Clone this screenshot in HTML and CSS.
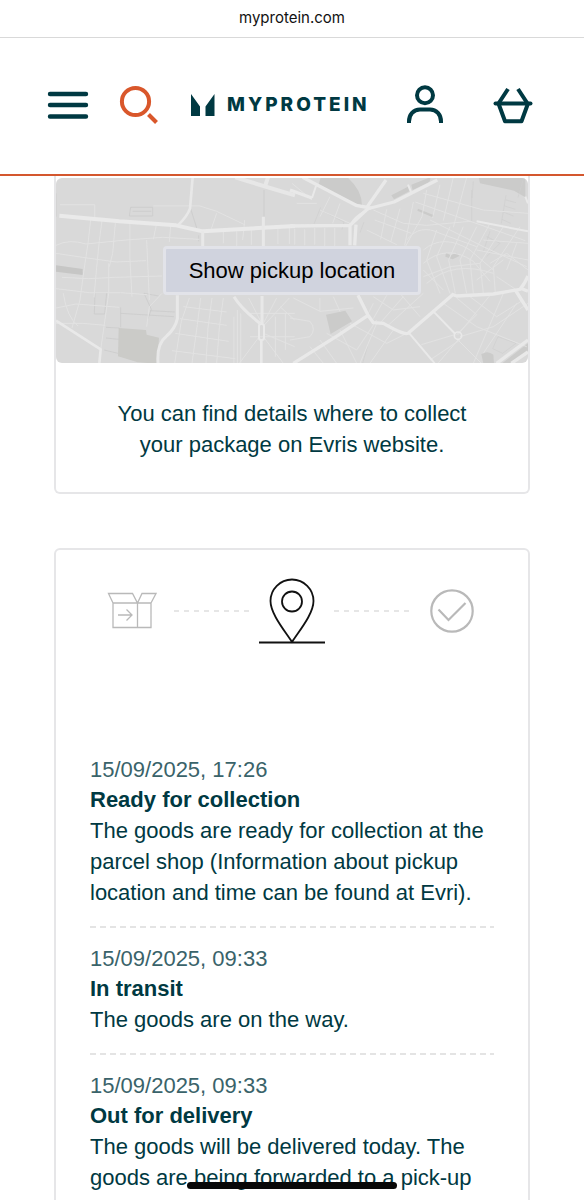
FILE: index.html
```html
<!DOCTYPE html>
<html lang="en">
<head>
<meta charset="utf-8">
<meta name="viewport" content="width=device-width, initial-scale=1">
<title>Track your order</title>
<link rel="stylesheet" href="styles.css">
</head>
<body>
<div class="screen">
  <div class="address-bar">myprotein.com</div>

  <header class="site-header">
    <div class="header-start">
      <button class="icon-button" type="button" aria-label="Menu">
        <svg width="42" height="42" viewBox="0 0 42 42" fill="none" stroke="currentColor" stroke-width="4.4" stroke-linecap="round"><path d="M3 10h36M3 21h36M3 32.500h36"/></svg>
      </button>
      <button class="icon-button search-button" type="button" aria-label="Search">
        <svg width="42" height="42" viewBox="0 0 42 42" fill="none" stroke="currentColor" stroke-width="4"><circle cx="16.500" cy="17.500" r="13.600"/><path d="M29.500 30.500l8 8"/></svg>
      </button>
      <a class="logo" href="#">
        <svg width="24" height="22" viewBox="0 0 24 22" fill="currentColor"><path d="M0 0l9 12.500V22H0zM23.500 0v22h-9v-9.500z"/></svg>
        <span>MYPROTEIN</span>
      </a>
    </div>
    <div class="header-end">
      <button class="icon-button" type="button" aria-label="Account">
        <svg width="42" height="42" viewBox="0 0 42 42" fill="none" stroke="currentColor" stroke-width="4"><circle cx="21" cy="11.200" r="8"/><path d="M5 39v-1.500C5 30.500 9.500 25.500 16 25.500h10c6.500 0 11 5 11 12V39"/></svg>
      </button>
      <a class="icon-button" href="#" aria-label="Basket">
        <svg width="42" height="42" viewBox="0 0 42 42" fill="none" stroke="currentColor" stroke-width="4" stroke-linejoin="round"><path d="M3.500 19.500h35" stroke-linecap="round"/><path d="M6.500 19.500L16 5M35.500 19.500L26 5M6.500 19.500L13 37.200h16.500l6.500-17.700"/></svg>
      </a>
    </div>
  </header>

  <main class="content">
    <section class="card pickup-card">
      <div class="map">
        <svg class="map-art" viewBox="0 0 472 185" preserveAspectRatio="xMidYMid slice" fill="none" stroke-linejoin="round" aria-hidden="true">
          <g transform="translate(-6 -8) scale(.33333)">
            <path fill="#c6c6c5" d="M18 286l80 11v18l-80-10z"/>
            <path fill="#cbcbc8" d="M206 474l82 6 2 14 37 9-4 78-60-4-59-18z"/>
            <g stroke="#c9c9c9" stroke-width="2">
              <path d="M242 112h66v26h-70zM248 124h56M135 368h35l-6 64h-31zM282 370l22 48-10 28M282 370l44 8M212 412v60M212 430l160 10M300 422l74 4M168 472l40 2M168 504l38 4M162 540l42 10M422 116l18 58M446 196v18M642 60v80M18 70v70"/>
            </g>
            <g stroke="#e2e2e2" stroke-width="3">
              <path d="M30 104h104v40M122 150l-8 70-12 80-12 90-24 84M156 152l-8 60-8 80-8 90M176 280v90l-14 100-10 70M196 160l-8 90-10 40M240 160v110l6 110M290 210l8 180M18 226q40-20 90-4l120-12 110-8 110 6M18 250l80 12 100 14 90-4M36 322l80 4 80-4 140-4M18 356l100 12 94 0 80 6M18 414l60-12 130 10M40 370q10 70 44 98M18 460l80 0 68 6M310 108h140l50 16 84 40M500 130l-16 46M584 150l-6 60M320 160l-10 48M362 166l-4 50M336 370l-38 40-8 60M520 180v40M560 184v44M604 180v44M684 166v56M718 166v56"/>
              <path d="M418 384l-24 70-20 126M452 384l-10 80-16 116M486 384l-12 90-6 106M520 384l-12 90-8 106M400 410l130 16M390 446l140 20M376 490l160 24M366 542l190 24M552 440v140M562 420v160M572 430v150M596 384l36 70M680 384l-40 76M718 384l-76 82M640 500l60 80M628 500l-60 80M640 490l94 40M596 430h138M600 500h134M690 410l44 40M676 440v120M706 430v110"/>
            </g>
            <path stroke="#eaeaea" stroke-width="12" d="M28 137l180 17 170 12 80 18 277-16"/>
            <path stroke="#e8e8e8" stroke-width="8" d="M428 22l-8 94q-8 22-34 48"/>
            <path stroke="#e8e8e8" stroke-width="9" d="M458 184v50M382 376v70q-6 30-34 54-28 20-24 80M552 380q20 34 78 80M640 140v92M636 378v82"/>
            <path stroke="#e9e9e9" stroke-width="8" d="M18 452l134 86-4 42M634 508v72"/>
            <rect x="627" y="462" width="15" height="48" rx="7" stroke="#e9e9e9" stroke-width="6"/>
            <path stroke="#e7e7e7" stroke-width="12" d="M556 22q90 28 179 54M654 22l-10 30"/>
          </g>
          <g transform="translate(234 -8) scale(.33333)">
            <path fill="#cbcbca" d="M92 22h80q44 38 44 84l-50-16-80-46zM304 76l50-26 4 14-46 24zM364 44l56-22q4 12-10 18l-42 20zM384 116l48 20-4 6-46-20zM108 434l58-12 20 32-64 38zM566 22h140v60l-34-20-102-22zM574 552q20-12 36 2l2 26h-32zM636 580l78-60v28l-46 34zM468 248l14 8 18-8 8 10-20 10-22-8z"/>
            <g stroke="#cecece" stroke-width="2">
              <path d="M545 60v94M550 34l-4 50M92 112l-20 50M92 120l70 36-6 22M222 156l-12 32M648 76l-14 84M648 90l30 8M644 108l32 10M640 126l30 12M636 148l26 12M700 28l-16 54M590 200l40 20M600 184l-20 60M630 220l-40 40M624 500l54 20-40 30-30-14zM232 530l-14 50"/>
            </g>
            <g stroke="#e2e2e2" stroke-width="3">
              <path d="M6 40l60 50M20 100h60M14 176v48M44 178v48M74 174v50M104 174v54M134 174v54M90 120l90 40M120 80l-30 60M150 100l-22 60M250 120l90 40 70 6 130-12M254 150l110 40M230 180l90 44M290 118l-18 90M330 116l-28 100M370 96l-26 130M410 60l-14 80-50 90M450 44l-22 100M490 22l-30 130M530 22l-40 150M400 70l180 50 134 10M376 96l330 116M420 150l160 80 130 60M350 210q40-50 100-20l110 40M400 240q60-50 140 0l70 60M400 280q70-60 150-6l50 60M410 340q80-70 200-30M400 300l60 60M440 180l-30 90 40 100M480 170l-40 90 40 110M520 170l-44 100 20 100M560 170l-50 100 20 100M600 160l-60 110 10 100M640 170l-70 110 10 90M690 170l-80 120 6 80M560 240l154 30M580 210l134 10M600 280l50-30 64 50M560 330l80-60M620 320l60 40M680 220l-30 80M400 320l80-30 90-10"/>
              <path d="M0 444l60 10q20 24 0 46l-60 10M10 384l80 40 100-10M90 384v40M130 380l20 44M250 380l60 40 80-10M250 400l-20 40M290 376l-40 70M340 380l-70 80M400 370l-110 100M390 440l-60-70M110 490l90 50 60-90M150 480l50 100M180 460l110 60 60-30M260 460l-50 120M310 480l-70 100M90 510l50 70M60 530l40 50M500 384l60 50-60 60M540 380l80 60 80-50M600 376l-96 118M460 400l100 70 150 60M504 510l-60 70M504 510l70 70M510 500l100-30 104-70M494 494l-100 30M640 370l-90 210M680 400l-100 150M420 570l90-60"/>
            </g>
            <g stroke="#e9e9e9">
              <path stroke-width="10" d="M0 60l66 24M38 22l160 84 44 8 70-18 130-66M0 168l180-2 58-54M288 30l-56 80M180 166v60M198 164l-4 62M204 376l30 60-90 60-134 84M234 436l16 22 30 2q70 40 76 28l132-114M484 372l16 6 110-6 80-14q14-16 24-40M676 360l38 60M690 354l24 10M620 580l94-70M664 580l50-34"/>
              <path stroke-width="6" d="M66 84l12-36M186 160q4-20 60-48M430 424l66 68M358 490l76 90M354 44l10 24M706 80l8 20M560 154l154 30"/>
              <circle cx="504" cy="497" r="11" stroke-width="5"/>
            </g>
          </g>
        </svg>
        <button class="map-button" type="button">Show pickup location</button>
      </div>
      <p class="pickup-note">You can find details where to collect your package on Evris website.</p>
    </section>

    <section class="card tracking-card">
      <div class="progress">
        <svg width="50" height="38" viewBox="0 0 50 38" fill="none" stroke="#b9b9b9" stroke-width="1.300"><path d="M6 11h38v24.500H6zM30.500 11v24.500M6 11L1.500 1.500h24L30.500 11l4.500-9.500h14L44 11M11 23h14M19.500 17.500L25 23l-5.500 5.500"/></svg>
        <span class="step-line step-line-before"></span>
        <svg width="66" height="66" viewBox="0 0 66 66" fill="none" stroke="#111" stroke-width="1.800"><path d="M0 64.500h66M33 64C26 53 11.500 36 11.500 23a21.500 21.500 0 0 1 43 0C54.500 36 40 53 33 64z"/><circle cx="33" cy="23.500" r="10"/></svg>
        <span class="step-line"></span>
        <svg width="44" height="44" viewBox="0 0 44 44" fill="none" stroke="#b9b9b9" stroke-width="2.200"><circle cx="22" cy="22" r="20.700"/><path d="M8.500 20.500l10 10.500L35.500 14"/></svg>
      </div>

      <ol class="events">
        <li class="event">
          <time class="event-time" datetime="2025-09-15T17:26">15/09/2025, 17:26</time>
          <h2 class="event-title">Ready for collection</h2>
          <p class="event-text">The goods are ready for collection at the parcel shop (Information about pickup location and time can be found at Evri).</p>
        </li>
        <li class="event">
          <time class="event-time" datetime="2025-09-15T09:33">15/09/2025, 09:33</time>
          <h2 class="event-title">In transit</h2>
          <p class="event-text">The goods are on the way.</p>
        </li>
        <li class="event">
          <time class="event-time" datetime="2025-09-15T09:33">15/09/2025, 09:33</time>
          <h2 class="event-title">Out for delivery</h2>
          <p class="event-text">The goods will be delivered today. The goods are being forwarded to a pick-up location.</p>
        </li>
      </ol>
    </section>
  </main>
  <div class="home-indicator"></div>
</div>
</body>
</html>
```

FILE: styles.css
```css
* {
  box-sizing: border-box;
}

body,
h2,
p,
ol {
  margin: 0;
  padding: 0;
}

body {
  background: #fff;
  color: #003942;
  font-family: "Liberation Sans", Arial, sans-serif;
  font-size: 22px;
  line-height: 31px;
}

button {
  font: inherit;
}

svg {
  display: block;
}

.screen {
  position: relative;
  height: 100vh;
  overflow: hidden;
}

.address-bar {
  padding: 8px 0 9px;
  border-bottom: 1px solid #d9d9d9;
  color: #111;
  font-family: Inter, sans-serif;
  font-size: 15px;
  line-height: 20px;
  text-align: center;
}

.site-header {
  display: flex;
  align-items: center;
  justify-content: space-between;
  padding: 46px 50px 48px 47px;
  border-bottom: 2px solid #d4572e;
}

.header-start,
.header-end {
  display: flex;
  align-items: center;
}

.header-start {
  gap: 30px;
}

.header-end {
  gap: 46px;
}

.icon-button {
  padding: 0;
  border: 0;
  background: none;
  color: #003942;
}

.search-button {
  color: #d9572b;
}

.logo {
  display: flex;
  align-items: center;
  gap: 12px;
  color: #003942;
  font-family: Inter, sans-serif;
  font-size: 19px;
  font-weight: 800;
  letter-spacing: 3px;
  line-height: 24px;
  text-decoration: none;
}

.content {
  display: flex;
  flex-direction: column;
  gap: 54px;
  padding: 0 54px;
}

.card {
  border: 2px solid #e6e6e8;
  border-radius: 6px;
}

.pickup-card {
  padding-top: 2px;
  border-top: 0;
  border-top-left-radius: 0;
  border-top-right-radius: 0;
}

.map {
  display: grid;
  place-items: center;
  overflow: hidden;
  border-radius: 6px;
  background: #d9d9d9;
}

.map-art,
.map-button {
  grid-area: 1 / 1;
}

.map-art {
  width: 100%;
}

.map-button {
  z-index: 1;
  padding: 6px 23px;
  border: 3px solid #e2e3e9;
  border-radius: 4px;
  background: #d0d3de;
  color: #000;
}

.pickup-note {
  padding: 35px 40px 32px;
  text-align: center;
}

.tracking-card {
  padding: 28px 34px;
}

.progress {
  display: grid;
  grid-template-columns: 50px 1fr 66px 1fr 50px;
  align-items: center;
  padding: 0 17px;
}

.progress svg {
  justify-self: center;
}

.step-line {
  width: 76px;
  height: 2px;
  margin: 0 9px;
  background: repeating-linear-gradient(90deg, #e6e6e6 0 5px, transparent 5px 10px);
}

.step-line-before {
  justify-self: end;
}

.events {
  margin-top: 111px;
  list-style: none;
}

.event {
  padding-bottom: 36px;
  background: repeating-linear-gradient(90deg, #e4e4e4 0 6px, transparent 6px 10px) left bottom 16px / 100% 2px no-repeat;
}

.event-time {
  display: block;
  color: #3a636a;
  line-height: 30px;
}

.event-title {
  font-size: 22px;
  font-weight: 700;
  line-height: 30px;
}

.home-indicator {
  position: absolute;
  bottom: 11px;
  left: 50%;
  width: 210px;
  height: 7px;
  border-radius: 4px;
  background: #080808;
  transform: translateX(-50%);
}
```
